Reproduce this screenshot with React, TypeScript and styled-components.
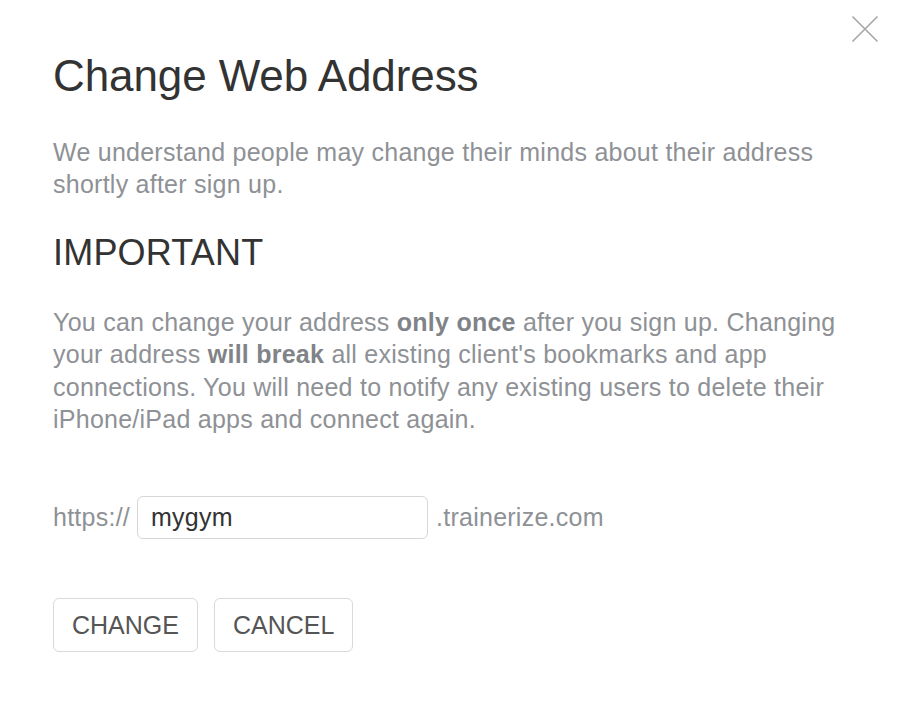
import React from "react";
import styled, { createGlobalStyle } from "styled-components";

const Global = createGlobalStyle`
  html, body { margin: 0; padding: 0; background: #fff; }
  body { font-family: "Liberation Sans", Arial, Helvetica, sans-serif; }
  * { box-sizing: border-box; }
`;

const Dialog = styled.div`
  position: relative;
  width: 904px;
  height: 702px;
  padding: 50px 53px 0 53px;
  display: flex;
  flex-direction: column;
`;

const Close = styled.button`
  position: absolute;
  top: 14px;
  right: 24px;
  width: 30px;
  height: 30px;
  padding: 0;
  border: none;
  background: transparent;
  display: flex;
  align-items: center;
  justify-content: center;
  cursor: pointer;
`;

const Title = styled.h1`
  margin: 0;
  font-size: 44px;
  font-weight: 400;
  line-height: 52px;
  color: #333;
  letter-spacing: -0.1px;
`;

const Text = styled.p<{ $top: number }>`
  margin: ${(p) => p.$top}px 0 0 0;
  font-size: 25px;
  line-height: 32.4px;
  color: #8e9195;
  letter-spacing: 0.25px;
  strong { font-weight: 700; color: #808387; }
`;

const Heading = styled.h2`
  margin: 30px 0 0 0;
  font-size: 36px;
  font-weight: 400;
  line-height: 44px;
  color: #333;
  letter-spacing: 0.2px;
`;

const AddressRow = styled.div`
  margin-top: 61px;
  display: flex;
  align-items: center;
  gap: 7px;
  font-size: 25px;
  color: #8e9195;
  letter-spacing: 0.25px;
`;

const Suffix = styled.span`
  margin-left: 1px;
`;

const Input = styled.input`
  width: 291px;
  height: 43px;
  border: 1px solid #d6d6d6;
  border-radius: 6px;
  padding: 0 13px;
  font-family: inherit;
  font-size: 25px;
  color: #333;
  outline: none;
  letter-spacing: 0.25px;
`;

const Buttons = styled.div`
  margin-top: 59px;
  display: flex;
  gap: 16px;
`;

const Button = styled.button`
  height: 54px;
  padding: 0 18px;
  border: 1px solid #d9d9d9;
  border-radius: 6px;
  background: #fff;
  font-family: inherit;
  font-size: 25px;
  color: #555;
  letter-spacing: 0;
  cursor: pointer;
`;

export default function App() {
  return (
    <>
      <Global />
      <Dialog>
        <Close aria-label="Close">
          <svg width="28" height="28" viewBox="0 0 28 28">
            <path d="M1.5 1.5 L26.5 26.5 M26.5 1.5 L1.5 26.5" stroke="#a6a6a6" strokeWidth="1.6" fill="none" />
          </svg>
        </Close>
        <Title>Change Web Address</Title>
        <Text $top={34}>
          We understand people may change their minds about their address shortly after sign up.
        </Text>
        <Heading>IMPORTANT</Heading>
        <Text $top={31}>
          You can change your address <strong>only once</strong> after you sign up. Changing your address{" "}
          <strong>will break</strong> all existing client's bookmarks and app connections. You will need to notify any
          existing users to delete their iPhone/iPad apps and connect again.
        </Text>
        <AddressRow>
          <span>https://</span>
          <Input defaultValue="mygym" />
          <Suffix>.trainerize.com</Suffix>
        </AddressRow>
        <Buttons>
          <Button>CHANGE</Button>
          <Button>CANCEL</Button>
        </Buttons>
      </Dialog>
    </>
  );
}
